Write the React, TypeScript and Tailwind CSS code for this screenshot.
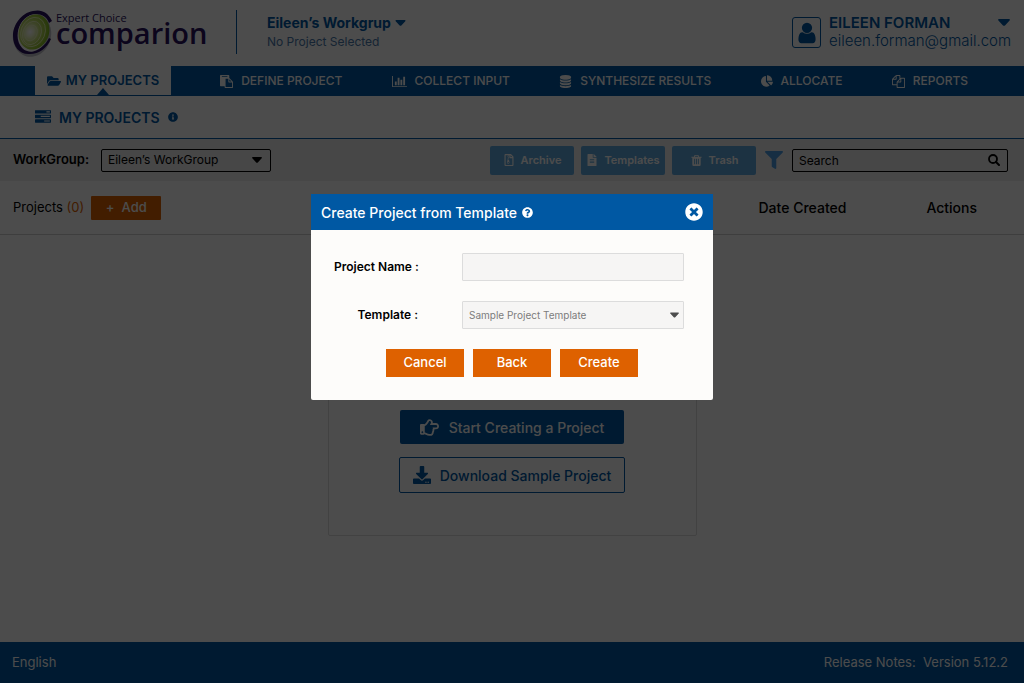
import type { ReactNode } from "react";
import {
  FaChartPie,
  FaDownload,
  FaFileAlt,
  FaFilter,
  FaFolderOpen,
  FaInfoCircle,
  FaQuestionCircle,
  FaRegFileArchive,
  FaRegHandPointRight,
  FaTimesCircle,
} from "react-icons/fa";

const paths = {
  tasks:
    "M1024 1408h640v-128h-640v128zm-384-512h1024v-128h-1024v128zm640-512h384v-128h-384v128zm512 832v256q0 26-19 45t-45 19h-1664q-26 0-45-19t-19-45v-256q0-26 19-45t45-19h1664q26 0 45 19t19 45zm0-512v256q0 26-19 45t-45 19h-1664q-26 0-45-19t-19-45v-256q0-26 19-45t45-19h1664q26 0 45 19t19 45zm0-512v256q0 26-19 45t-45 19h-1664q-26 0-45-19t-19-45v-256q0-26 19-45t45-19h1664q26 0 45 19t19 45z",
  paste:
    "M768 1664h896v-640h-416q-40 0-68-28t-28-68v-416h-384v1152zm256-1440v-64q0-13-9.5-22.5t-22.5-9.5h-704q-13 0-22.5 9.5t-9.5 22.5v64q0 13 9.5 22.5t22.5 9.5h704q13 0 22.5-9.5t9.5-22.5zm256 672h299l-299-299v299zm512 128v672q0 40-28 68t-68 28h-960q-40 0-68-28t-28-68v-160h-544q-40 0-68-28t-28-68v-1344q0-40 28-68t68-28h1088q40 0 68 28t28 68v328q21 13 36 28l408 408q28 28 48 76t20 88z",
  files:
    "M1696 384q40 0 68 28t28 68v1216q0 40-28 68t-68 28h-960q-40 0-68-28t-28-68v-288h-544q-40 0-68-28t-28-68v-672q0-40 20-88t48-76l408-408q28-28 76-48t88-20h416q40 0 68 28t28 68v328q68-40 128-40h416zm-544 213l-299 299h299v-299zm-640-384l-299 299h299v-299zm196 647l316-316v-416h-384v416q0 40-28 68t-68 28h-416v640h512v-256q0-40 20-88t48-76zm956 804v-1152h-384v416q0 40-28 68t-68 28h-416v640h896z",
  database:
    "M896 768q237 0 443-43t325-127v170q0 69-103 128t-280 93.5-385 34.5-385-34.5-280-93.5-103-128v-170q119 84 325 127t443 43zm0 768q237 0 443-43t325-127v170q0 69-103 128t-280 93.5-385 34.5-385-34.5-280-93.5-103-128v-170q119 84 325 127t443 43zm0-384q237 0 443-43t325-127v170q0 69-103 128t-280 93.5-385 34.5-385-34.5-280-93.5-103-128v-170q119 84 325 127t443 43zm0-1152q208 0 385 34.5t280 93.5 103 128v128q0 69-103 128t-280 93.5-385 34.5-385-34.5-280-93.5-103-128v-128q0-69 103-128t280-93.5 385-34.5z",
  user: "M1536 1399q0 109-62.5 187t-150.5 78h-854q-88 0-150.5-78t-62.5-187q0-85 8.5-160.5t31.5-152 58.5-131 94-89 134.5-34.5q131 128 313 128t313-128q76 0 134.5 34.5t94 89 58.5 131 31.5 152 8.5 160.5zm-256-887q0 159-112.5 271.5t-271.5 112.5-271.5-112.5-112.5-271.5 112.5-271.5 271.5-112.5 271.5 112.5 112.5 271.5z",
  trash:
    "M704 1376v-704q0-14-9-23t-23-9h-64q-14 0-23 9t-9 23v704q0 14 9 23t23 9h64q14 0 23-9t9-23zm256 0v-704q0-14-9-23t-23-9h-64q-14 0-23 9t-9 23v704q0 14 9 23t23 9h64q14 0 23-9t9-23zm256 0v-704q0-14-9-23t-23-9h-64q-14 0-23 9t-9 23v704q0 14 9 23t23 9h64q14 0 23-9t9-23zm-544-992h448l-48-117q-7-9-17-11h-317q-10 2-17 11zm928 32v64q0 14-9 23t-23 9h-96v948q0 83-47 143.5t-113 60.5h-832q-66 0-113-58.5t-47-141.5v-952h-96q-14 0-23-9t-9-23v-64q0-14 9-23t23-9h309l70-167q15-37 54-63t79-26h320q40 0 79 26t54 63l70 167h309q14 0 23 9t9 23z",
};

function Glyph({ name, className }: { name: keyof typeof paths; className: string }) {
  return (
    <svg viewBox="0 0 1792 1792" fill="currentColor" className={className} aria-hidden="true">
      <path d={paths[name]} />
    </svg>
  );
}

function BarChart({ className }: { className: string }) {
  return (
    <svg viewBox="0 0 2048 1792" fill="currentColor" className={className} aria-hidden="true">
      <path d="M640 896v512h-256v-512h256zm384-512v1024h-256v-1024h256zm1024 1152v128h-2048v-1536h128v1408h1920zm-640-896v768h-256v-768h256zm384-384v1152h-256v-1152h256z" />
    </svg>
  );
}

function Caret({ className }: { className: string }) {
  return (
    <svg viewBox="0 0 12 7" fill="currentColor" className={className} aria-hidden="true">
      <path d="M1 0h10c.9 0 1.200.9.600 1.500L7 6.400c-.6.6-1.400.6-2 0L.4 1.500C-.2.9.1 0 1 0z" />
    </svg>
  );
}

function SearchIcon({ className }: { className: string }) {
  return (
    <svg viewBox="0 0 12 12" fill="none" stroke="currentColor" className={className} aria-hidden="true">
      <circle cx="5" cy="5" r="4" strokeWidth="1.800" />
      <path d="M8 8l3 3" strokeWidth="2" strokeLinecap="round" />
    </svg>
  );
}

function Logo() {
  return (
    <a href="#home" aria-label="Expert Choice comparion" className="flex items-start font-['Open_Sans',sans-serif] text-[#2a1260]">
      <svg viewBox="0 0 44 50" className="h-[50px] w-[44px] shrink-0" aria-hidden="true">
        <defs>
          <radialGradient id="lens" cx="38%" cy="54%" r="62%">
            <stop offset="0" stopColor="#ffffff" />
            <stop offset="0.2" stopColor="#eef6cf" />
            <stop offset="0.5" stopColor="#c3de72" />
            <stop offset="0.8" stopColor="#9ccb35" />
            <stop offset="1" stopColor="#7fb822" />
          </radialGradient>
        </defs>
        <ellipse cx="20" cy="27" rx="19" ry="22" transform="rotate(16 20 27)" fill="#c3c3cb" />
        <path
          d="M40 13C36 4 29 1 21 3 9 5 1 17 1 28c0 11 7 19 17 18 9 0 17-6 21-15l-2-1c-4 8-10 12-17 12-9 0-14-6-14-15C6 16 13 7 23 6c7 0 12 3 14 9z"
          fill="#2a1260"
        />
        <ellipse cx="21" cy="25" rx="15" ry="19" transform="rotate(18 21 25)" fill="#fff" />
        <ellipse cx="22" cy="24" rx="15" ry="18" transform="rotate(22 22 24)" fill="url(#lens)" />
        <g fill="none" stroke="#eaf4bd" strokeWidth="0.800">
          <ellipse cx="21" cy="24" rx="12" ry="15" transform="rotate(22 21 24)" />
          <ellipse cx="20" cy="25" rx="9" ry="12" transform="rotate(22 20 25)" />
          <ellipse cx="19" cy="25" rx="6" ry="8" transform="rotate(22 19 25)" />
        </g>
      </svg>
      <span className="flex flex-col pt-1">
        <span className="text-[11px] leading-[12px]">Expert Choice</span>
        <span className="text-[29px] leading-[18px] font-semibold">comparion</span>
      </span>
    </a>
  );
}

const steps: { label: string; icon: ReactNode }[] = [
  { label: "DEFINE PROJECT", icon: <Glyph name="paste" className="size-[13px]" /> },
  { label: "COLLECT INPUT", icon: <BarChart className="h-[13px] w-[15px]" /> },
  { label: "SYNTHESIZE RESULTS", icon: <Glyph name="database" className="size-[13px]" /> },
  { label: "ALLOCATE", icon: <FaChartPie className="size-[12px]" /> },
  { label: "REPORTS", icon: <Glyph name="files" className="size-[13px]" /> },
];

function Header() {
  return (
    <header className="flex h-[66px] items-start pr-[14px] pl-[12px] text-[#0058a3]">
      <div className="w-[224px] pt-2">
        <Logo />
      </div>
      <div className="mt-[10px] h-[44px] border-l border-[#0058a3]" />
      <div className="ml-[30px] pt-[13px]">
        <button type="button" className="flex items-center gap-1 text-[14px] leading-[20px] font-bold">
          Eileen’s Workgrup
          <Caret className="h-[6px] w-[11px]" />
        </button>
        <p className="text-[12px] leading-[17px] text-[#4a78ab]">No Project Selected</p>
      </div>
      <div className="ml-auto flex gap-2 pt-[13px]">
        <span className="mt-1 flex h-[31px] w-[29px] items-center justify-center rounded-[3px] border border-[#0058a3]">
          <Glyph name="user" className="size-[24px]" />
        </span>
        <div className="w-[181px]">
          <button type="button" className="flex w-full items-center justify-between text-[15px] leading-[19px] font-semibold">
            EILEEN FORMAN
            <Caret className="h-[7px] w-[12px]" />
          </button>
          <p className="text-[15px] leading-[18px] font-light whitespace-nowrap">eileen.forman@gmail.com</p>
        </div>
      </div>
    </header>
  );
}

function Nav() {
  return (
    <nav className="flex h-[30px] items-center justify-between bg-[#0058a3] pr-[56px] pl-[35px] text-[12px] font-medium text-white">
      <a
        href="#projects"
        className="relative flex h-[29px] w-[136px] items-center justify-center gap-[5px] self-start bg-white text-[13px] font-semibold text-[#0058a3]"
      >
        <FaFolderOpen className="size-[14px]" />
        MY PROJECTS
        <svg viewBox="0 0 12 7" className="absolute bottom-0 left-1/2 h-[7px] w-[12px] -translate-x-1/2" aria-hidden="true">
          <path d="M6 0l6 7H0z" fill="#0058a3" />
        </svg>
      </a>
      {steps.map((step) => (
        <a key={step.label} href="#step" className="flex items-center gap-2 whitespace-nowrap">
          {step.icon}
          {step.label}
        </a>
      ))}
    </nav>
  );
}

function ToolButton({ icon, children }: { icon: ReactNode; children: ReactNode }) {
  return (
    <button
      type="button"
      className="flex h-[29px] w-[84px] items-center justify-center gap-[6px] rounded-[2px] bg-[#5fa8dc] text-[11px] font-semibold text-white"
    >
      {icon}
      {children}
    </button>
  );
}

function Toolbar() {
  return (
    <div className="flex h-[42px] items-center bg-[#ededed] pr-[16px] pl-[13px]">
      <label htmlFor="workgroup" className="w-[88px] text-[13px] font-semibold">
        WorkGroup:
      </label>
      <div className="relative">
        <select
          id="workgroup"
          className="block h-[23px] w-[170px] appearance-none rounded-[2px] border border-black bg-transparent px-[6px] text-[12px]"
        >
          <option>Eileen’s WorkGroup</option>
        </select>
        <Caret className="pointer-events-none absolute top-2 right-[9px] h-[6px] w-[10px]" />
      </div>
      <div className="ml-auto flex items-center gap-[7px]">
        <ToolButton icon={<FaRegFileArchive className="size-[12px]" />}>Archive</ToolButton>
        <ToolButton icon={<FaFileAlt className="size-[12px]" />}>Templates</ToolButton>
        <ToolButton icon={<Glyph name="trash" className="size-[13px]" />}>Trash</ToolButton>
        <button type="button" aria-label="Filter" className="ml-[2px] text-[#4a9be0]">
          <FaFilter className="size-[18px]" />
        </button>
        <div className="relative ml-[2px]">
          <input
            type="search"
            aria-label="Search"
            placeholder="Search"
            className="block h-[23px] w-[216px] rounded-[2px] border border-black bg-transparent px-[6px] text-[12px] placeholder:text-black"
          />
          <SearchIcon className="pointer-events-none absolute top-[5px] right-2 size-[12px]" />
        </div>
      </div>
    </div>
  );
}

function TemplateDialog() {
  return (
    <div className="fixed inset-0 flex items-start justify-center bg-black/70 pt-[194px]">
      <form
        role="dialog"
        aria-modal="true"
        aria-labelledby="dialog-title"
        className="w-full max-w-[402px] overflow-hidden rounded-b-[2px] bg-[#fdfcfa] text-black"
      >
        <div className="flex h-9 items-center bg-[#0058a3] px-[10px] text-white">
          <h2 id="dialog-title" className="text-[14px] font-medium">
            Create Project from Template
          </h2>
          <FaQuestionCircle className="ml-[5px] size-[11px]" />
          <button type="button" aria-label="Close" className="ml-auto">
            <FaTimesCircle className="size-[18px]" />
          </button>
        </div>
        <div className="px-[23px] pt-[23px] pb-[23px]">
          <div className="grid grid-cols-[84px_222px] items-center gap-x-[44px] gap-y-5 text-[12px]">
            <label htmlFor="project-name" className="text-right font-semibold whitespace-nowrap">
              Project Name :
            </label>
            <input id="project-name" type="text" className="h-7 rounded-[1px] border border-[#dcdcdc] bg-[#f6f5f4] px-[6px]" />
            <label htmlFor="template" className="text-right font-semibold">
              Template :
            </label>
            <div className="relative">
              <select
                id="template"
                className="block h-7 w-full appearance-none rounded-[1px] border border-[#dcdcdc] bg-[#f6f5f4] px-[6px] text-[10px] text-[#7c7c7c]"
              >
                <option>Sample Project Template</option>
              </select>
              <Caret className="pointer-events-none absolute top-[11px] right-[5px] h-[6px] w-[9px] text-[#4d4d4d]" />
            </div>
          </div>
          <div className="mt-5 flex justify-center gap-[9px] text-[13px] font-medium text-white">
            <button type="button" className="h-7 w-[78px] bg-[#de6100]">Cancel</button>
            <button type="button" className="h-7 w-[78px] bg-[#de6100]">Back</button>
            <button type="submit" className="h-7 w-[78px] bg-[#de6100]">Create</button>
          </div>
        </div>
      </form>
    </div>
  );
}

export default function App() {
  return (
    <div className="flex min-h-screen flex-col bg-white font-[Inter,sans-serif] text-black">
      <Header />
      <Nav />
      <div className="flex h-[43px] items-center border-b border-[#0058a3] pl-[35px] text-[#0058a3]">
        <Glyph name="tasks" className="size-[16px]" />
        <h1 className="ml-2 text-[14px] font-semibold">MY PROJECTS</h1>
        <FaInfoCircle className="ml-2 size-[10px]" />
      </div>
      <Toolbar />
      <div className="flex h-[54px] items-center border-b border-[#cfcfcf] pr-[47px] pl-[13px] text-[13px]">
        <span>
          Projects <span className="text-[#de6100]">(0)</span>
        </span>
        <button
          type="button"
          className="ml-[7px] flex h-6 w-[70px] items-center justify-center gap-[7px] rounded-[1px] bg-[#de6100] text-[13px] font-medium text-white"
        >
          <span>+</span>
          <span>Add</span>
        </button>
        <span className="ml-auto text-[14px] font-medium">Date Created</span>
        <span className="ml-[80px] text-[14px] font-medium">Actions</span>
      </div>
      <main className="flex flex-1 justify-center pt-[35px] text-[14px] font-medium">
        <section className="flex h-[266px] w-[369px] flex-col items-center justify-end gap-[13px] self-start rounded-[2px] border border-[#dcdcdc] pb-[42px]">
          <button type="button" className="flex h-[34px] w-[224px] items-center justify-center gap-[10px] rounded-[2px] bg-[#0058a3] text-white">
            <FaRegHandPointRight className="size-[19px]" />
            Start Creating a Project
          </button>
          <button type="button" className="flex h-9 w-[226px] items-center justify-center gap-[9px] rounded-[2px] border border-[#0058a3] text-[#0058a3]">
            <FaDownload className="size-[18px]" />
            Download Sample Project
          </button>
        </section>
      </main>
      <footer className="flex h-[41px] items-center justify-between bg-[#0058a3] pr-[16px] pl-[12px] text-[13px] text-white">
        <a href="#language">English</a>
        <a href="#release-notes">
          Release Notes:&nbsp; Version 5.12.2
        </a>
      </footer>
      <TemplateDialog />
    </div>
  );
}
